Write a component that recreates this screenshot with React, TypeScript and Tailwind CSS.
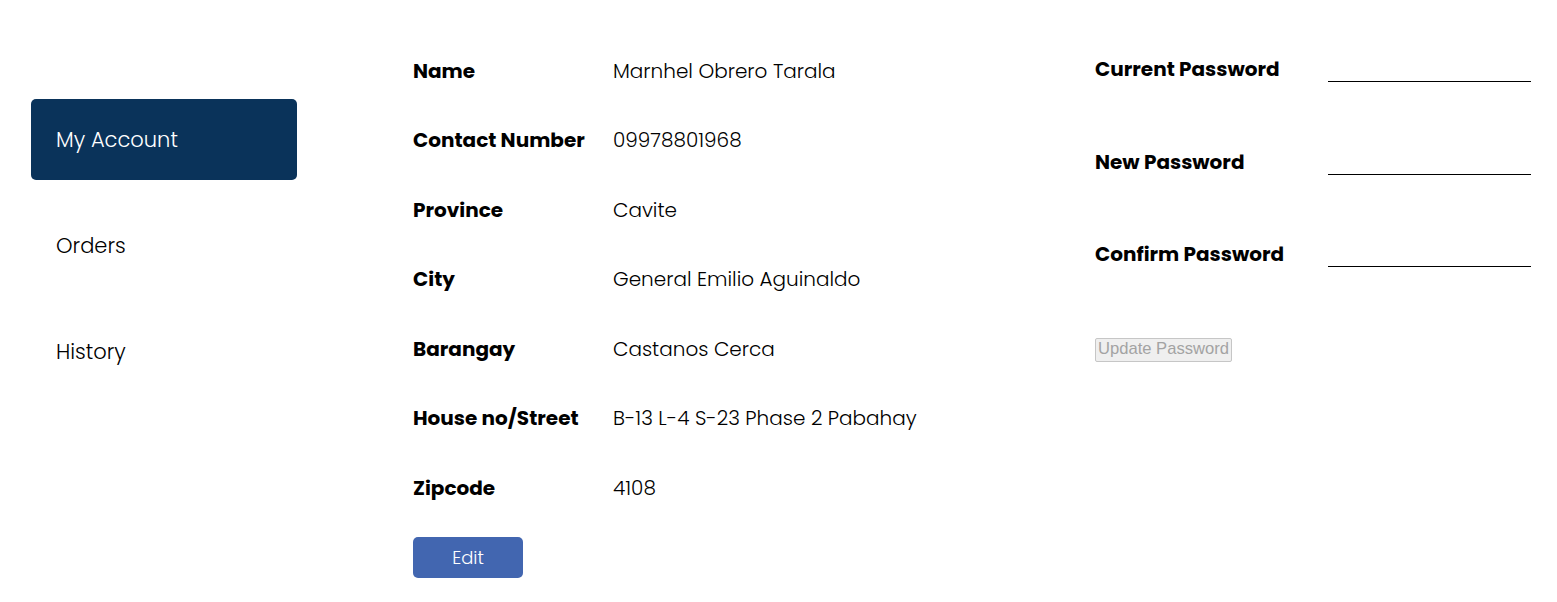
const details = [
  { label: "Name", value: "Marnhel Obrero Tarala" },
  { label: "Contact Number", value: "09978801968" },
  { label: "Province", value: "Cavite" },
  { label: "City", value: "General Emilio Aguinaldo" },
  { label: "Barangay", value: "Castanos Cerca" },
  { label: "House no/Street", value: "B-13 L-4 S-23 Phase 2 Pabahay" },
  { label: "Zipcode", value: "4108" },
];

const passwords = ["Current Password", "New Password", "Confirm Password"];

export default function App() {
  return (
    <main className="flex min-h-screen bg-white pl-[31px] font-['Poppins','Inter',sans-serif] text-black">
      {/* sidebar */}
      <nav className="mt-[99px] flex w-[266px] shrink-0 flex-col gap-[25px]">
        <a className="flex h-[81px] items-center rounded-[5px] bg-[#0a335a] pl-[25px] text-[21px] font-light text-white">
          My Account
        </a>
        <a className="flex h-[81px] items-center pl-[25px] text-[21px] font-light">Orders</a>
        <a className="flex h-[81px] items-center pl-[25px] text-[21px] font-light">History</a>
      </nav>

      {/* account details */}
      <section className="ml-[116px] w-[682px] shrink-0 pt-[36px]">
        {details.map((d) => (
          <div key={d.label} className="flex h-[69.5px] items-center">
            <span className="w-[200px] text-[20px] font-bold">{d.label}</span>
            <span className="text-[20px] font-light">{d.value}</span>
          </div>
        ))}
        <button className="mt-[14px] h-[41px] w-[110px] rounded-[5px] bg-[#4266b0] text-[18px] font-light text-white">
          Edit
        </button>
      </section>

      {/* change password */}
      <section className="w-[436px] shrink-0 pt-[23px]">
        {passwords.map((p) => (
          <div key={p} className="flex h-[92.5px] items-center">
            <span className="w-[233px] text-[20px] font-bold">{p}</span>
            <input type="password" className="h-[26px] w-[203px] border-b border-black outline-none" />
          </div>
        ))}
        <button
          disabled
          className="mt-[37px] h-[24px] whitespace-nowrap rounded-[2px] border border-[#c6c6c6] bg-[#efefef] px-[2px] font-['Liberation_Sans',Arial,sans-serif] text-[16.6px] leading-none text-[#a3a3a3]"
        >
          Update Password
        </button>
      </section>
    </main>
  );
}
